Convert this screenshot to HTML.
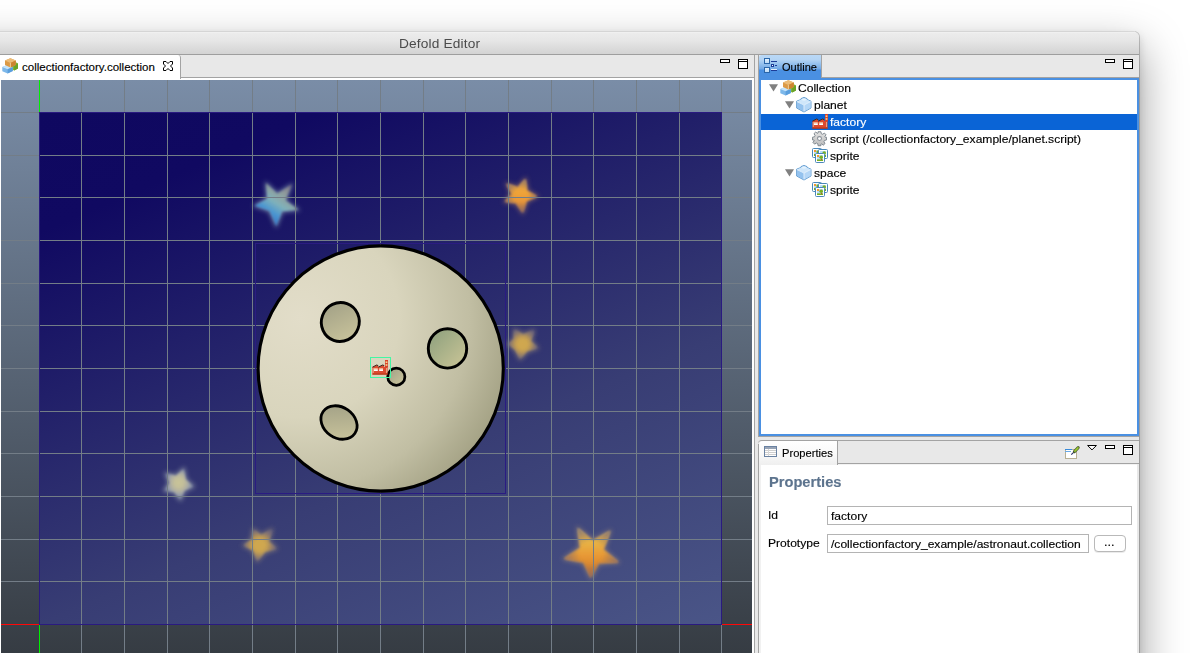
<!DOCTYPE html>
<html lang="en">
<head>
<meta charset="utf-8">
<title>Defold Editor</title>
<style>
html,body{margin:0;padding:0;}
body{width:1196px;height:653px;overflow:hidden;background:#fff;position:relative;
  font-family:"Liberation Sans",sans-serif;font-size:11px;color:#000;}
.abs{position:absolute;}
.t{position:absolute;white-space:pre;line-height:1;}
.sx{font-size:11.5px;transform:scaleX(var(--k));transform-origin:0 0;-webkit-text-stroke:.15px currentColor;}
#win{left:-40px;top:32px;width:1179px;height:720px;background:#e8e8e8;border-radius:5px 5px 0 0;
  box-shadow:0 0 0 1px rgba(0,0,0,.19),0 4px 8px 1px rgba(0,0,0,.12),0 18px 44px 3px rgba(0,0,0,.36);}
#titlebar{left:-40px;top:32px;width:1179px;height:22px;border-radius:5px 5px 0 0;
  background:linear-gradient(#f4f4f4 0,#ececec 1px,#e6e6e6 40%,#d3d3d3 100%);border-bottom:1px solid #9e9e9e;}
#title{left:399px;top:37px;font-size:13.5px;letter-spacing:.15px;color:#4b4b4b;}
/* editor */
#edtabrow{left:0;top:55px;width:754px;height:22px;background:#e8e8e8;border-bottom:1px solid #a3a3a3;}
#edwhite{left:0;top:78px;width:754px;height:575px;background:#fff;}
#edright{left:754px;top:55px;width:1px;height:598px;background:#a3a3a3;}
#edtab{left:0;top:55px;width:180px;height:24px;background:#fff;border-right:1px solid #a3a3a3;border-top-right-radius:3px;}
#scene{left:1px;top:80px;width:751px;height:573px;overflow:hidden;
  background:linear-gradient(#7a8da7 0,#363c43 100%);}
/* outline */
#oltabrow{left:758px;top:55px;width:381px;height:22px;background:#e8e8e8;border-bottom:1px solid #a3a3a3;}
#olleft{left:758px;top:55px;width:1px;height:382px;background:#a3a3a3;}
#oltab{left:759px;top:55px;width:62px;height:23px;border-right:1px solid #a3a3a3;
  background:linear-gradient(#b9d8f6 0,#b4d4f4 20%,#93c0ee 40%,#74aae6 60%,#4a90e2 66%,#4a90e2 100%);border-top-left-radius:3px;}
#olbox{left:759px;top:78px;width:376px;height:354px;border:2px solid #4a90e2;background:#fff;}
#olbot{left:758px;top:436px;width:381px;height:1px;background:#a3a3a3;}
.sel{left:761px;top:114px;width:376px;height:16px;background:#0a64d6;}
/* properties */
#prtabrow{left:758px;top:440px;width:381px;height:24px;background:#e8e8e8;border-top:1px solid #a3a3a3;border-bottom:1px solid #a3a3a3;box-sizing:border-box;border-top-left-radius:4px;}
#prbody{left:759px;top:464px;width:378px;height:189px;box-sizing:border-box;border-left:2px solid #f1f1f1;background:linear-gradient(#f3f3f3 0,#f3f3f3 1px,#fff 1px);}
#prleft{left:758px;top:444px;width:1px;height:209px;background:#a3a3a3;}
#prtab{left:759px;top:441px;width:78px;height:24px;border-right:1px solid #a3a3a3;border-top-left-radius:4px;
  background:linear-gradient(#fff 0,#fafafa 50%,#efefef 100%);}
.inp{position:absolute;box-sizing:border-box;border:1px solid #b4b4b4;background:#fff;height:19px;}
.btn{position:absolute;box-sizing:border-box;border:1px solid #b9b9b9;border-radius:4px;background:#fff;box-shadow:0 1px 0 rgba(0,0,0,.08);}
</style>
</head>
<body>
<div id="root" style="position:absolute;left:0;top:0;width:1196px;height:653px;overflow:hidden;background:#fff;">
<div id="win" class="abs"></div>
<div id="titlebar" class="abs"></div>
<div class="abs" style="left:0;top:31px;width:1135px;height:1px;background:rgba(255,255,255,.4)"></div>
<div id="title" class="t" style="transform:scaleX(1.015);transform-origin:0 0;">Defold Editor</div>

<!-- editor part -->
<div id="edtabrow" class="abs"></div>
<div id="edwhite" class="abs"></div>
<div id="edright" class="abs"></div>
<div id="edtab" class="abs"></div>
<div class="t sx" id="t_ed" style="left:22.1px;top:61.5px;--k:1.0;">collectionfactory.collection</div>

<div id="scene" class="abs">
<svg width="751" height="573" viewBox="1 80 751 573" style="position:absolute;left:0;top:0">
  <defs>
    <linearGradient id="sky" gradientUnits="userSpaceOnUse" x1="39" y1="112" x2="327.5" y2="791">
      <stop offset="0" stop-color="#0f0860"/>
      <stop offset="0.15" stop-color="#100961"/>
      <stop offset="0.64" stop-color="#383d74"/>
      <stop offset="1" stop-color="#4a5587"/>
    </linearGradient>
    <radialGradient id="moon" gradientUnits="userSpaceOnUse" cx="300" cy="318" r="236">
      <stop offset="0" stop-color="#e2ddc9"/>
      <stop offset="0.42" stop-color="#d9d5bd"/>
      <stop offset="0.72" stop-color="#c1bea3"/>
      <stop offset="1" stop-color="#9a987a"/>
    </radialGradient>
    <linearGradient id="cr1" x1="0" y1="0" x2="1" y2="1">
      <stop offset="0" stop-color="#9e9d84"/>
      <stop offset="1" stop-color="#cec89e"/>
    </linearGradient>
    <linearGradient id="cr2" x1="0" y1="0" x2="1" y2="1">
      <stop offset="0" stop-color="#8a9e7c"/>
      <stop offset="1" stop-color="#cdc798"/>
    </linearGradient>
    <linearGradient id="sg1" x1="0.85" y1="0.1" x2="0.3" y2="0.95">
      <stop offset="0" stop-color="#b09c88" stop-opacity=".5"/><stop offset="0.3" stop-color="#98b0a4" stop-opacity=".8"/><stop offset="0.5" stop-color="#80b4bc"/><stop offset="0.72" stop-color="#4a98d4"/><stop offset="1" stop-color="#2f6ec4"/>
    </linearGradient>
    <linearGradient id="sg2" x1="0.5" y1="0" x2="0.5" y2="1">
      <stop offset="0" stop-color="#d4a050"/><stop offset="0.4" stop-color="#f0a438"/><stop offset="0.65" stop-color="#e8983a"/><stop offset="1" stop-color="#b06c40"/>
    </linearGradient>
    <radialGradient id="sg3" cx=".48" cy=".5" r=".56">
      <stop offset="0" stop-color="#d0a84e"/><stop offset="0.32" stop-color="#cea650"/><stop offset="0.55" stop-color="#b89858"/><stop offset="0.8" stop-color="#8c7c70" stop-opacity=".85"/><stop offset="1" stop-color="#6a6480" stop-opacity=".5"/>
    </radialGradient>
    <radialGradient id="sg4" cx=".5" cy=".45" r=".58">
      <stop offset="0" stop-color="#d2cc98"/><stop offset="0.3" stop-color="#cac49a"/><stop offset="0.55" stop-color="#b0b0a4"/><stop offset="0.8" stop-color="#8c98b0" stop-opacity=".8"/><stop offset="1" stop-color="#6878a8" stop-opacity=".45"/>
    </radialGradient>
    <linearGradient id="sg6" x1="0.5" y1="0" x2="0.5" y2="1">
      <stop offset="0" stop-color="#d0b468"/><stop offset="0.28" stop-color="#e8b446"/><stop offset="0.55" stop-color="#e89a36"/><stop offset="1" stop-color="#c87026"/>
    </linearGradient>
    <radialGradient id="fade" cx=".5" cy=".5" r=".6">
      <stop offset="0" stop-color="#8c6c60" stop-opacity="0"/><stop offset="0.36" stop-color="#8c6c60" stop-opacity="0"/><stop offset="0.6" stop-color="#8a6e68" stop-opacity=".45"/><stop offset="0.85" stop-color="#7a6a78" stop-opacity=".8"/><stop offset="1" stop-color="#6a6488" stop-opacity=".9"/>
    </radialGradient>
    <filter id="b1" x="-50%" y="-50%" width="200%" height="200%"><feGaussianBlur stdDeviation="1.3"/></filter>
    <filter id="b2" x="-50%" y="-50%" width="200%" height="200%"><feGaussianBlur stdDeviation="2.6"/></filter>
  </defs>
  <!-- sky sprite -->
  <rect x="39" y="112" width="683" height="513" fill="url(#sky)"/>
  <!-- stars -->
  <g>
    <polygon points="264.8,180.7 277.3,192.5 293.4,182.5 286.5,200.2 300.8,210.4 282.7,212.3 276.3,228.5 268.7,211.8 252.2,206.0 266.3,198.1" fill="#8fa6b8" opacity=".75" filter="url(#b2)"/>
    <polygon points="265.9,182.9 277.2,193.8 291.8,184.5 285.4,200.6 298.4,209.7 282.0,211.3 276.3,226.0 269.5,210.8 254.7,205.7 267.4,198.7" fill="url(#sg1)" opacity="0.95" filter="url(#b1)"/>
    <polygon points="526.1,176.6 528.4,189.9 539.5,196.6 527.7,202.3 523.2,215.2 515.2,204.3 502.6,202.6 510.3,193.9 504.7,182.0 517.5,185.9" fill="#a07868" opacity=".75" filter="url(#b2)"/>
    <polygon points="525.4,179.0 527.4,190.6 537.0,196.4 526.7,201.5 522.8,212.7 515.8,203.2 504.9,201.6 511.5,194.1 506.6,183.7 517.8,187.1" fill="url(#sg2)" opacity="1" filter="url(#b1)"/>
    <polygon points="525.4,179.0 527.4,190.6 537.0,196.4 526.7,201.5 522.8,212.7 515.8,203.2 504.9,201.6 511.5,194.1 506.6,183.7 517.8,187.1" fill="url(#fade)" filter="url(#b1)"/>
    <polygon points="513.3,327.7 523.3,333.1 535.5,328.9 532.1,340.7 539.7,348.4 527.9,352.4 519.8,361.0 514.2,350.7 506.2,344.0 512.8,338.4" fill="#9a8a78" opacity=".75" filter="url(#b2)"/>
    <polygon points="514.5,329.9 523.1,334.4 533.8,330.7 530.9,341.0 537.3,347.7 527.2,351.3 520.1,358.5 515.1,349.8 508.7,344.0 513.9,339.0" fill="url(#sg3)" opacity="1" filter="url(#b1)"/>
    <polygon points="514.5,329.9 523.1,334.4 533.8,330.7 530.9,341.0 537.3,347.7 527.2,351.3 520.1,358.5 515.1,349.8 508.7,344.0 513.9,339.0" fill="url(#fade)" opacity=".5" filter="url(#b1)"/>
    <polygon points="184.5,466.6 186.9,479.0 195.5,486.7 185.3,491.4 180.6,502.0 173.5,493.0 162.4,491.6 168.3,482.9 163.9,472.0 175.7,474.5" fill="#a0a8b0" opacity=".75" filter="url(#b2)"/>
    <polygon points="183.7,468.9 185.8,479.6 193.0,486.4 184.5,490.5 180.3,499.5 174.1,491.9 164.7,490.6 169.6,483.1 165.8,473.6 176.0,475.7" fill="url(#sg4)" opacity="0.9" filter="url(#b1)"/>
    <polygon points="252.4,527.6 261.3,533.8 273.4,527.8 270.0,541.0 278.5,549.0 265.7,553.2 256.7,563.0 252.1,551.3 241.5,545.5 250.9,538.9" fill="#9a8a78" opacity=".75" filter="url(#b2)"/>
    <polygon points="253.4,529.9 261.2,535.1 271.9,529.8 268.8,541.4 276.0,548.4 265.1,552.1 257.2,560.5 253.1,550.5 244.0,545.3 252.0,539.5" fill="url(#sg3)" opacity="1" filter="url(#b1)"/>
    <polygon points="253.4,529.9 261.2,535.1 271.9,529.8 268.8,541.4 276.0,548.4 265.1,552.1 257.2,560.5 253.1,550.5 244.0,545.3 252.0,539.5" fill="url(#fade)" opacity=".5" filter="url(#b1)"/>
    <polygon points="576.5,525.7 592.9,539.0 612.0,528.9 605.0,549.3 620.9,563.1 599.5,564.6 590.7,580.1 582.5,563.8 561.5,559.3 578.7,547.1" fill="#a08a78" opacity=".75" filter="url(#b2)"/>
    <polygon points="577.7,527.9 592.8,540.3 610.4,530.8 603.8,549.6 618.6,562.3 598.8,563.5 590.7,577.6 583.3,562.8 564.0,558.8 579.9,547.7" fill="url(#sg6)" opacity="1" filter="url(#b1)"/>
    <polygon points="577.7,527.9 592.8,540.3 610.4,530.8 603.8,549.6 618.6,562.3 598.8,563.5 590.7,577.6 583.3,562.8 564.0,558.8 579.9,547.7" fill="url(#fade)" filter="url(#b1)"/>
  </g>
  <!-- grid -->
  <g fill="#737d87" shape-rendering="crispEdges">
<rect x="81" y="80" width="1" height="573"/>
<rect x="124" y="80" width="1" height="573"/>
<rect x="167" y="80" width="1" height="573"/>
<rect x="209" y="80" width="1" height="573"/>
<rect x="252" y="80" width="1" height="573"/>
<rect x="295" y="80" width="1" height="573"/>
<rect x="337" y="80" width="1" height="573"/>
<rect x="380" y="80" width="1" height="573"/>
<rect x="423" y="80" width="1" height="573"/>
<rect x="465" y="80" width="1" height="573"/>
<rect x="508" y="80" width="1" height="573"/>
<rect x="551" y="80" width="1" height="573"/>
<rect x="593" y="80" width="1" height="573"/>
<rect x="636" y="80" width="1" height="573"/>
<rect x="679" y="80" width="1" height="573"/>
<rect x="1" y="112" width="751" height="1"/>
<rect x="1" y="155" width="751" height="1"/>
<rect x="1" y="197" width="751" height="1"/>
<rect x="1" y="240" width="751" height="1"/>
<rect x="1" y="283" width="751" height="1"/>
<rect x="1" y="325" width="751" height="1"/>
<rect x="1" y="368" width="751" height="1"/>
<rect x="1" y="411" width="751" height="1"/>
<rect x="1" y="453" width="751" height="1"/>
<rect x="1" y="496" width="751" height="1"/>
<rect x="1" y="539" width="751" height="1"/>
<rect x="1" y="581" width="751" height="1"/>
<rect x="1" y="624" width="751" height="1"/>
  </g>
  <!-- sky outline -->
  <rect x="39.5" y="112.5" width="682" height="512" fill="none" stroke="#2a1a80" stroke-width="1"/>
  <!-- axes -->
  <g shape-rendering="crispEdges">
    <rect x="39" y="80" width="1" height="32" fill="#00f000"/>
    <rect x="39" y="625" width="1" height="28" fill="#00f000"/>
    <rect x="1" y="624" width="38" height="1" fill="#ff0808"/>
    <rect x="722" y="624" width="30" height="1" fill="#ff0808"/>
    <rect x="721" y="80" width="1" height="32" fill="#737d87"/>
    <rect x="721" y="625" width="1" height="28" fill="#737d87"/>
  </g>
  <!-- planet bbox -->
  <rect x="255.5" y="243.5" width="250" height="250" fill="none" stroke="#2b1c82" stroke-width="1"/>
  <!-- planet -->
  <circle cx="380.7" cy="368.5" r="122.6" fill="url(#moon)" stroke="#000" stroke-width="3.1"/>
  <ellipse cx="340.3" cy="322" rx="18.9" ry="19.6" fill="url(#cr1)" stroke="#000" stroke-width="2.9" transform="rotate(20 340.3 322)"/>
  <ellipse cx="447.5" cy="348.4" rx="19.2" ry="19.7" fill="url(#cr2)" stroke="#000" stroke-width="2.9"/>
  <ellipse cx="339" cy="422.5" rx="19.3" ry="15.3" fill="url(#cr1)" stroke="#000" stroke-width="2.8" transform="rotate(35 339 422.5)"/>
  <circle cx="396.3" cy="376.7" r="8.6" fill="url(#cr1)" stroke="#000" stroke-width="2.7"/>
  <!-- factory selection -->
  <rect x="370.5" y="357.5" width="20" height="20" fill="none" stroke="#44f6a4" stroke-width="1"/>

</svg>
</div>

<!-- outline panel -->
<div id="oltabrow" class="abs"></div>
<div id="olleft" class="abs"></div>
<div id="olbox" class="abs"></div>
<div id="oltab" class="abs"></div>
<div id="olbot" class="abs"></div>
<div class="t sx" id="t_ol" style="left:781.5px;top:61.5px;--k:.96;">Outline</div>
<div class="sel abs"></div>
<div class="t sx" id="t_r1" style="left:797.6px;top:82.5px;--k:1.05;">Collection</div>
<div class="t sx" id="t_r2" style="left:813.6px;top:99.5px;--k:1.05;">planet</div>
<div class="t sx" id="t_r3" style="left:829.6px;top:116.5px;--k:1.05;color:#fff;">factory</div>
<div class="t sx" id="t_r4" style="left:829.6px;top:133.5px;--k:1.05;">script (/collectionfactory_example/planet.script)</div>
<div class="t sx" id="t_r5" style="left:829.6px;top:150.5px;--k:1.05;">sprite</div>
<div class="t sx" id="t_r6" style="left:813.6px;top:167.5px;--k:1.05;">space</div>
<div class="t sx" id="t_r7" style="left:829.6px;top:184.5px;--k:1.05;">sprite</div>

<!-- properties panel -->
<div id="prbody" class="abs"></div>
<div id="prtabrow" class="abs"></div>
<div id="prleft" class="abs"></div>
<div id="prtab" class="abs"></div>
<div class="t sx" id="t_pt" style="left:782.2px;top:447.5px;--k:.97;">Properties</div>
<div class="t sx" id="t_ph" style="left:769.3px;top:475px;font-size:14.5px;font-weight:bold;color:#5d748e;--k:1.01;">Properties</div>
<div class="t sx" id="t_id" style="left:768px;top:509.5px;--k:1.05;">Id</div>
<div class="inp" style="left:827px;top:506px;width:305px;"></div>
<div class="t sx" id="t_f1" style="left:831px;top:510.5px;--k:1.05;">factory</div>
<div class="t sx" id="t_pr" style="left:768px;top:537.5px;--k:1.05;">Prototype</div>
<div class="inp" style="left:827px;top:534px;width:262px;"></div>
<div class="t sx" id="t_f2" style="left:831px;top:538.5px;--k:1.05;">/collectionfactory_example/astronaut.collection</div>
<div class="btn" style="left:1094px;top:535px;width:32px;height:17px;"></div>
<div class="t sx" id="t_dots" style="left:1103.8px;top:537px;--k:1.1;">...</div>

<!-- icons overlay -->
<svg class="abs" style="left:0;top:0" width="1196" height="653" viewBox="0 0 1196 653">
  <defs>
    <linearGradient id="gGear" x1="0" y1="0" x2="0" y2="1"><stop offset="0" stop-color="#e4e4e4"/><stop offset="1" stop-color="#bcbcbc"/></linearGradient>
    <linearGradient id="gSq" x1="0" y1="0" x2="0" y2="1"><stop offset="0" stop-color="#e8f4ff"/><stop offset="1" stop-color="#b8d8f6"/></linearGradient>
    <symbol id="iBricks" viewBox="0 0 16 16">
      <path d="M10 6.2 L14.6 4.6 L16 5.4 L16 10.6 L12.2 12.4 L10 11.6 Z" fill="#7cb436"/>
      <path d="M12.2 7.4 L16 5.6 L16 10.6 L12.2 12.4 Z" fill="#6aa226"/>
      <path d="M0.3 9 L5.4 7 L10.8 9 L10.8 13 L5.6 15.4 L0.3 13.2 Z" fill="#7db8ea"/>
      <path d="M0.3 9 L5.4 7 L10.8 9 L5.6 11.2 Z" fill="#c6e4fa"/>
      <path d="M5.6 11.2 L10.8 9 L10.8 13 L5.6 15.4 Z" fill="#5a9edc"/>
      <path d="M3 2.6 L8.4 0.2 L13.8 2.6 L13.8 7 L8.4 9.4 L3 7 Z" fill="#dc9a46"/>
      <path d="M3 2.6 L8.4 0.2 L13.8 2.6 L8.4 5 Z" fill="#ecbc78"/>
      <path d="M8.4 5 L13.8 2.6 L13.8 7 L8.4 9.4 Z" fill="#cc8430"/>
      <path d="M8.4 5 L8.4 9.4" stroke="#f6dcae" stroke-width=".8"/>
    </symbol>
    <symbol id="iBrick" viewBox="0 0 16 16">
      <path d="M8 0.4 L11 1.6 L11 2.4 L15 4.2 L15 11 L8 15 L0.6 11 L0.6 4.2 L5 2.4 L5 1.6 Z" fill="#a8cff2" stroke="#5c98ce" stroke-width=".9" stroke-linejoin="round"/>
      <path d="M0.9 4.4 L8 1.2 L14.7 4.4 L8 7.8 Z" fill="#cfe6fa"/>
      <path d="M8 7.8 L14.7 4.4 L14.7 10.8 L8 14.6 Z" fill="#b4d6f6"/>
      <path d="M0.9 4.4 L8 7.8 L8 14.6 L0.9 10.8 Z" fill="#94c2ee"/>
      <path d="M1 4.6 L8 8 L14.6 4.6 M8 8 L8 14.4" stroke="#e6f3fd" stroke-width=".9" fill="none"/>
      <ellipse cx="8" cy="2.6" rx="2.6" ry="1.1" fill="#e4f2fd"/>
    </symbol>
    <symbol id="iPics" viewBox="0 0 16 16">
      <g>
        <rect x="0.5" y="0.5" width="9" height="9" rx="1" fill="#fff" stroke="#4a88ba"/>
        <rect x="2" y="2" width="6" height="6" fill="#b8dcf8"/>
        <rect x="2" y="2" width="2" height="2" fill="#f09a30"/>
        <circle cx="6.2" cy="4" r="1.8" fill="#78b020"/>
        <rect x="2" y="6" width="6" height="2" fill="#78b020"/>
      </g>
      <g transform="translate(6,1)">
        <rect x="0.5" y="0.5" width="9" height="9" rx="1" fill="#fff" stroke="#4a88ba"/>
        <rect x="2" y="2" width="6" height="6" fill="#b8dcf8"/>
        <circle cx="6.2" cy="4" r="1.8" fill="#78b020"/>
        <rect x="2" y="6" width="6" height="2" fill="#78b020"/>
      </g>
      <g transform="translate(3,5)">
        <rect x="0.5" y="0.5" width="9" height="9" rx="1" fill="#fff" stroke="#4a88ba"/>
        <rect x="2" y="2" width="6" height="6" fill="#b8dcf8"/>
        <rect x="2" y="2" width="2" height="2" fill="#f09a30"/>
        <circle cx="6.2" cy="4.2" r="1.8" fill="#78b020"/>
        <rect x="2" y="6.4" width="6" height="1.6" fill="#78b020"/>
        <rect x="6" y="6" width="1" height="1" fill="#c05030"/>
      </g>
    </symbol>
    <symbol id="iFac" viewBox="0 0 16 16">
    <path d="M0.4 7.2 L4.6 5 L6.2 5.6 L6.2 7.2 L10.6 5 L12.2 5.6 L12.2 7 L15.6 7 L15.6 14.6 L0.4 14.6 Z" fill="#dc4a30"/>
    <path d="M0.4 7.2 L4.6 5 L6.2 5.6 M6.2 7.2 L10.6 5 L12.2 5.6" stroke="#3a2a20" stroke-width="1" fill="none"/>
    <path d="M0.4 14.1 H15.6" stroke="#b03010" stroke-width="1"/>
    <rect x="13" y="0" width="3" height="7.4" fill="#d8402a"/>
    <rect x="13.6" y="1.4" width="1.8" height="1.6" fill="#f4d890"/>
    <rect x="13.6" y="4.2" width="1.8" height="1.6" fill="#f4d890"/>
    <rect x="1.8" y="9.2" width="4" height="1.8" fill="#fff"/>
    <rect x="7.2" y="9.2" width="3.8" height="1.8" fill="#fff"/>
    <rect x="1.8" y="8.2" width="4" height="1" fill="#f4c8a0"/>
    <rect x="7.2" y="8.2" width="3.8" height="1" fill="#f4c8a0"/>
    <rect x="0.8" y="8" width="0.8" height="5" fill="#f0b890"/>
    <rect x="14" y="8" width="0.8" height="5" fill="#f0b890"/>
  </symbol>
    <symbol id="iMin" viewBox="0 0 10 4"><rect x="0.5" y="0.5" width="9" height="3" fill="#fff" stroke="#000"/></symbol>
    <symbol id="iMax" viewBox="0 0 10 10"><rect x="0.5" y="0.5" width="9" height="9" fill="#fff" stroke="#000"/><rect x="1" y="2" width="8" height="1" fill="#000"/></symbol>
    <symbol id="iTri" viewBox="0 0 9 8"><path d="M0 0.3 L9 0.3 L4.5 7.4 Z" fill="#808080"/></symbol>
  </defs>
  <use href="#iFac" x="372" y="360" width="16" height="16"/>
  <!-- editor tab -->
  <use href="#iBricks" x="2" y="58" width="16" height="16"/>
  <path transform="translate(163,61)" d="M0.5 0.5 H3 L5 2.5 L7 0.5 H9.5 V3 L7.5 5 L9.5 7 V9.5 H7 L5 7.5 L3 9.5 H0.5 V7 L2.5 5 L0.5 3 Z" fill="#fff" stroke="#000" stroke-width="1" stroke-linejoin="round"/>
  <use href="#iMin" x="720" y="59" width="10" height="4"/>
  <use href="#iMax" x="738" y="59" width="10" height="10"/>
  <!-- outline tab -->
  <g shape-rendering="crispEdges">
    <rect x="764.5" y="58.5" width="5" height="5" fill="url(#gSq)" stroke="#2a66aa"/>
    <rect x="764.5" y="67.5" width="5" height="5" fill="url(#gSq)" stroke="#2a66aa"/>
    <rect x="771" y="61" width="6" height="1" fill="#1c3c98"/>
    <rect x="771" y="64" width="3" height="3" fill="#1c3c98"/>
    <rect x="772" y="65" width="1" height="1" fill="#fff"/>
    <rect x="775" y="65" width="2" height="1" fill="#1c3c98"/>
    <rect x="771" y="69" width="6" height="1" fill="#e8f2fc"/>
    <rect x="771" y="70" width="6" height="1" fill="#1c3c98"/>
  </g>
  <use href="#iMin" x="1105" y="59" width="10" height="4"/>
  <use href="#iMax" x="1123" y="59" width="10" height="10"/>
  <!-- tree -->
  <use href="#iTri" x="769" y="84" width="9" height="8"/>
  <use href="#iBricks" x="780" y="80" width="16" height="16"/>
  <use href="#iTri" x="785" y="101" width="9" height="8"/>
  <use href="#iBrick" x="796" y="97" width="16" height="16"/>
  <use href="#iFac" x="812" y="114" width="16" height="16"/>
  <g transform="translate(819.5,138.6) scale(.94)">
    <g fill="url(#gGear)" stroke="#7c848c" stroke-width="1">
      <path d="M-1.5 -7.3 H1.5 L1.9 -5.2 L3.4 -4.6 L5.2 -5.9 L7 -4 L5.6 -2.3 L5.9 -1.5 L7.4 -1.5 V1.5 L5.3 1.9 L4.7 3.4 L5.9 5.2 L4 7 L2.3 5.6 L1.5 5.9 V7.6 H-1.5 L-1.9 5.3 L-3.4 4.7 L-5.2 5.9 L-7 4 L-5.6 2.3 L-5.9 1.5 H-7.4 V-1.5 L-5.3 -1.9 L-4.7 -3.4 L-5.9 -5.2 L-4 -7 L-2.3 -5.6 L-1.5 -5.9 Z"/>
    </g>
    <circle cx="0" cy="0" r="2.1" fill="#fff" stroke="#8a9098" stroke-width="1.1"/>
  </g>
  <use href="#iPics" x="812" y="148" width="16" height="16"/>
  <use href="#iTri" x="785" y="169" width="9" height="8"/>
  <use href="#iBrick" x="796" y="165" width="16" height="16"/>
  <use href="#iPics" x="812" y="182" width="16" height="16"/>
  <!-- properties tab -->
  <g shape-rendering="crispEdges">
    <rect x="764.5" y="446.5" width="12" height="10" fill="#fff" stroke="#6a82a2"/>
    <rect x="765" y="447" width="11" height="2" fill="#98a4b6"/>
    <rect x="765" y="450" width="11" height="1" fill="#cfcfcf"/>
    <rect x="765" y="452" width="11" height="1" fill="#cfcfcf"/>
    <rect x="765" y="454" width="11" height="1" fill="#cfcfcf"/>
    <rect x="768" y="449" width="1" height="7" fill="#d8d8d8"/>
  </g>
  <!-- properties toolbar -->
  <g>
    <rect x="1065.5" y="449.5" width="11" height="9" fill="#fff" stroke="#b8b094"/>
    <rect x="1065" y="449" width="7" height="1" fill="#3a8ad8"/>
    <rect x="1065" y="451" width="6" height="1" fill="#6aaae8"/>
    <path d="M1071.3 454.7 L1074.6 451.4" stroke="#2a3068" stroke-width="1.1"/>
    <path d="M1074.4 451.6 L1078.2 447.6" stroke="#4a5a30" stroke-width="3" stroke-linecap="round"/>
    <path d="M1074.9 451.1 L1078 447.9" stroke="#9ccc30" stroke-width="1.6" stroke-linecap="round"/>
    <path d="M1087.6 445.5 H1096.4 L1092 449.9 Z" fill="#fff" stroke="#000" stroke-width="1" stroke-linejoin="miter"/>
  </g>
  <use href="#iMin" x="1105" y="445" width="10" height="4"/>
  <use href="#iMax" x="1123" y="445" width="10" height="10"/>
</svg>
</div>
</body>
</html>
